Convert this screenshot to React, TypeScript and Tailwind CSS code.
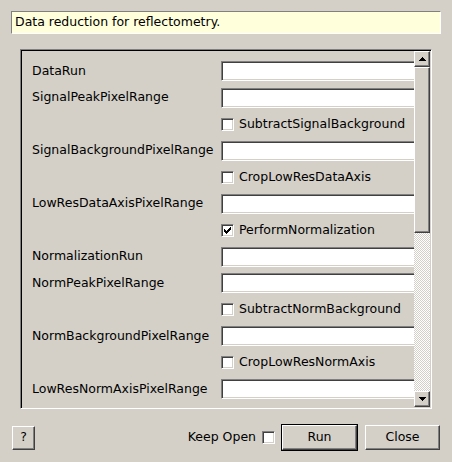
import React from 'react'

const sunken =
    'border border-t-[#808080] border-l-[#808080] border-b-white border-r-white shadow-[inset_1px_1px_0_#404040,inset_-1px_-1px_0_#d4d0c8]'
const raised =
    'border border-t-white border-l-white border-b-[#404040] border-r-[#404040] shadow-[inset_-1px_-1px_0_#808080]'

type Row = { kind: 'input' | 'check'; label: string; checked?: boolean }

const rows: Row[] = [
    { kind: 'input', label: 'DataRun' },
    { kind: 'input', label: 'SignalPeakPixelRange' },
    { kind: 'check', label: 'SubtractSignalBackground' },
    { kind: 'input', label: 'SignalBackgroundPixelRange' },
    { kind: 'check', label: 'CropLowResDataAxis' },
    { kind: 'input', label: 'LowResDataAxisPixelRange' },
    { kind: 'check', label: 'PerformNormalization', checked: true },
    { kind: 'input', label: 'NormalizationRun' },
    { kind: 'input', label: 'NormPeakPixelRange' },
    { kind: 'check', label: 'SubtractNormBackground' },
    { kind: 'input', label: 'NormBackgroundPixelRange' },
    { kind: 'check', label: 'CropLowResNormAxis' },
    { kind: 'input', label: 'LowResNormAxisPixelRange' },
]

function CheckBox({ checked }: { checked?: boolean }) {
    return (
        <div className={`w-[13px] h-[13px] bg-white shrink-0 flex items-center justify-center ${sunken}`}>
            {checked && (
                <svg width="7" height="7" viewBox="0 0 7 7" shapeRendering="crispEdges">
                    <rect x="0" y="2" width="1" height="3" fill="#000" />
                    <rect x="1" y="3" width="1" height="3" fill="#000" />
                    <rect x="2" y="4" width="1" height="3" fill="#000" />
                    <rect x="3" y="3" width="1" height="3" fill="#000" />
                    <rect x="4" y="2" width="1" height="3" fill="#000" />
                    <rect x="5" y="1" width="1" height="3" fill="#000" />
                    <rect x="6" y="0" width="1" height="3" fill="#000" />
                </svg>
            )}
        </div>
    )
}

function Arrow({ down }: { down?: boolean }) {
    return (
        <svg width="7" height="4" viewBox="0 0 7 4" shapeRendering="crispEdges">
            <polygon points={down ? '0,0 7,0 3.5,4' : '3.5,0 7,4 0,4'} fill="#000" />
        </svg>
    )
}

function App() {
    return (
        <div className="w-[452px] h-[462px] bg-[#d4d0c8] text-black text-[12.5px] font-['DejaVu_Sans',sans-serif] flex flex-col overflow-hidden">
            <div className="mt-[11px] ml-[11px] w-[430px] h-[23px] bg-[#ffffdc] flex items-center pl-[3px] border border-t-[#808080] border-l-[#808080] border-b-white border-r-white">
                Data reduction for reflectometry.
            </div>

            {/* scroll area */}
            <div className="mt-[15px] ml-[20px] w-[412px] h-[360px] flex border border-t-[#808080] border-l-[#808080] border-b-white border-r-white shadow-[inset_1px_1px_0_#000,inset_-1px_-1px_0_#d4d0c8] p-[1px]">
                <div className="flex-1 min-w-0 overflow-hidden pt-[10px] pl-[10px] flex flex-col gap-[6px]">
                    {rows.map((r) =>
                        r.kind === 'input' ? (
                            <div key={r.label} className="h-[20.5px] flex items-center shrink-0">
                                <span className="w-[189px] shrink-0 whitespace-nowrap">{r.label}</span>
                                <div className={`w-[198px] h-[20px] bg-white shrink-0 ${sunken}`} />
                            </div>
                        ) : (
                            <div key={r.label} className="h-[20.5px] flex items-center shrink-0 pl-[189px] gap-[5px]">
                                <CheckBox checked={r.checked} />
                                <span className="whitespace-nowrap">{r.label}</span>
                            </div>
                        )
                    )}
                </div>
                <div className="w-[16px] flex flex-col shrink-0">
                    <div className={`h-[16px] bg-[#d4d0c8] flex items-center justify-center ${raised}`}>
                        <Arrow />
                    </div>
                    <div className={`h-[166px] bg-[#d4d0c8] ${raised}`} />
                    <div className="flex-1 bg-[image:repeating-conic-gradient(#d4d0c8_0_25%,#ffffff_0_50%)] bg-[length:2px_2px]" />
                    <div className={`h-[16px] bg-[#d4d0c8] flex items-center justify-center ${raised}`}>
                        <Arrow down />
                    </div>
                </div>
            </div>

            <div className="mt-[15px] h-[27px] px-[12px] flex items-center">
                <button className={`w-[23px] h-[24px] bg-[#d4d0c8] flex items-center justify-center ${raised}`}>?</button>
                <div className="flex-1" />
                <span className="mr-[6px]">Keep Open</span>
                <CheckBox />
                <div className="ml-[6px] w-[77px] h-[27px] border border-black flex">
                    <button className={`flex-1 bg-[#d4d0c8] flex items-center justify-center ${raised}`}>Run</button>
                </div>
                <button className={`ml-[7px] w-[75px] h-[25px] bg-[#d4d0c8] flex items-center justify-center ${raised}`}>Close</button>
            </div>
        </div>
    )
}

export default App
